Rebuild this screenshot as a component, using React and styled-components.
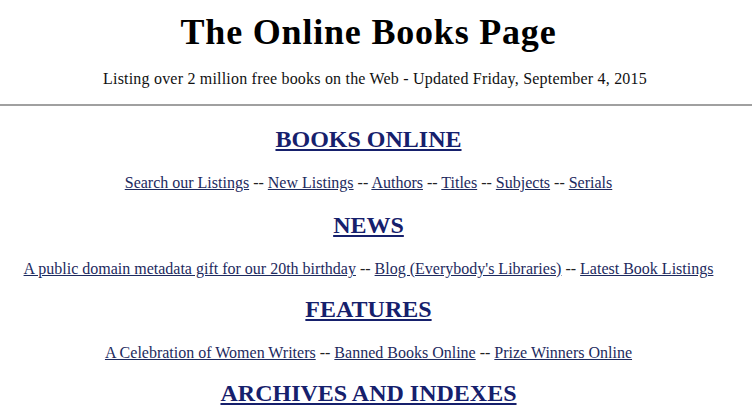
import React from "react";
import styled, { createGlobalStyle } from "styled-components";

const Global = createGlobalStyle`
  html, body { margin: 0; padding: 0; background: #fff; }
  body { font-family: "Liberation Serif", "Times New Roman", serif; color: #111; }
`;

const Page = styled.div`
  display: flex;
  flex-direction: column;
  align-items: stretch;
`;

const Header = styled.header`
  display: flex;
  flex-direction: column;
  align-items: center;
  padding: 11px 15px 0 0;
`;

const Title = styled.h1`
  margin: 0;
  font-family: "Liberation Serif", serif;
  font-weight: bold;
  font-size: 36px;
  line-height: 42px;
  letter-spacing: 0.8px;
  color: #000;
`;

const Tagline = styled.p`
  margin: 16px 0 0;
  padding-left: 13px;
  font-size: 16px;
  line-height: 20px;
  letter-spacing: 0.2px;
  color: #111;
`;

const Rule = styled.hr`
  width: 100%;
  margin: 15px 0 0;
  border: 0;
  height: 2px;
  background: #a0a0a0;
`;

const Content = styled.main`
  display: flex;
  flex-direction: column;
  align-items: center;
  padding-right: 15px;
`;

const Section = styled.section`
  display: flex;
  flex-direction: column;
  align-items: center;
  margin-top: ${(p) => p.$top}px;
`;

const Heading = styled.a`
  font-weight: bold;
  font-size: 24px;
  line-height: 28px;
  color: #16206c;
  text-decoration: underline;
  text-decoration-thickness: 2px;
  text-underline-offset: 2px;
`;

const LinkRow = styled.p`
  margin: 20px 0 0;
  font-size: 16px;
  line-height: 20px;
  color: #222;
  white-space: nowrap;
`;

const Link = styled.a`
  color: #1d2a5e;
  text-decoration: underline;
`;

const sections = [
  {
    title: "BOOKS ONLINE",
    top: 19,
    links: ["Search our Listings", "New Listings", "Authors", "Titles", "Subjects", "Serials"],
  },
  {
    title: "NEWS",
    top: 18,
    links: [
      "A public domain metadata gift for our 20th birthday",
      "Blog (Everybody's Libraries)",
      "Latest Book Listings",
    ],
  },
  {
    title: "FEATURES",
    top: 16,
    links: ["A Celebration of Women Writers", "Banned Books Online", "Prize Winners Online"],
  },
  { title: "ARCHIVES AND INDEXES", top: 16, links: [] },
];

export default function App() {
  return (
    <Page>
      <Global />
      <Header>
        <Title>The Online Books Page</Title>
        <Tagline>Listing over 2 million free books on the Web - Updated Friday, September 4, 2015</Tagline>
      </Header>
      <Rule />
      <Content>
        {sections.map((s) => (
          <Section key={s.title} $top={s.top}>
            <Heading href="#">{s.title}</Heading>
            {s.links.length > 0 && (
              <LinkRow>
                {s.links.map((l, i) => (
                  <React.Fragment key={l}>
                    {i > 0 && " -- "}
                    <Link href="#">{l}</Link>
                  </React.Fragment>
                ))}
              </LinkRow>
            )}
          </Section>
        ))}
      </Content>
    </Page>
  );
}
